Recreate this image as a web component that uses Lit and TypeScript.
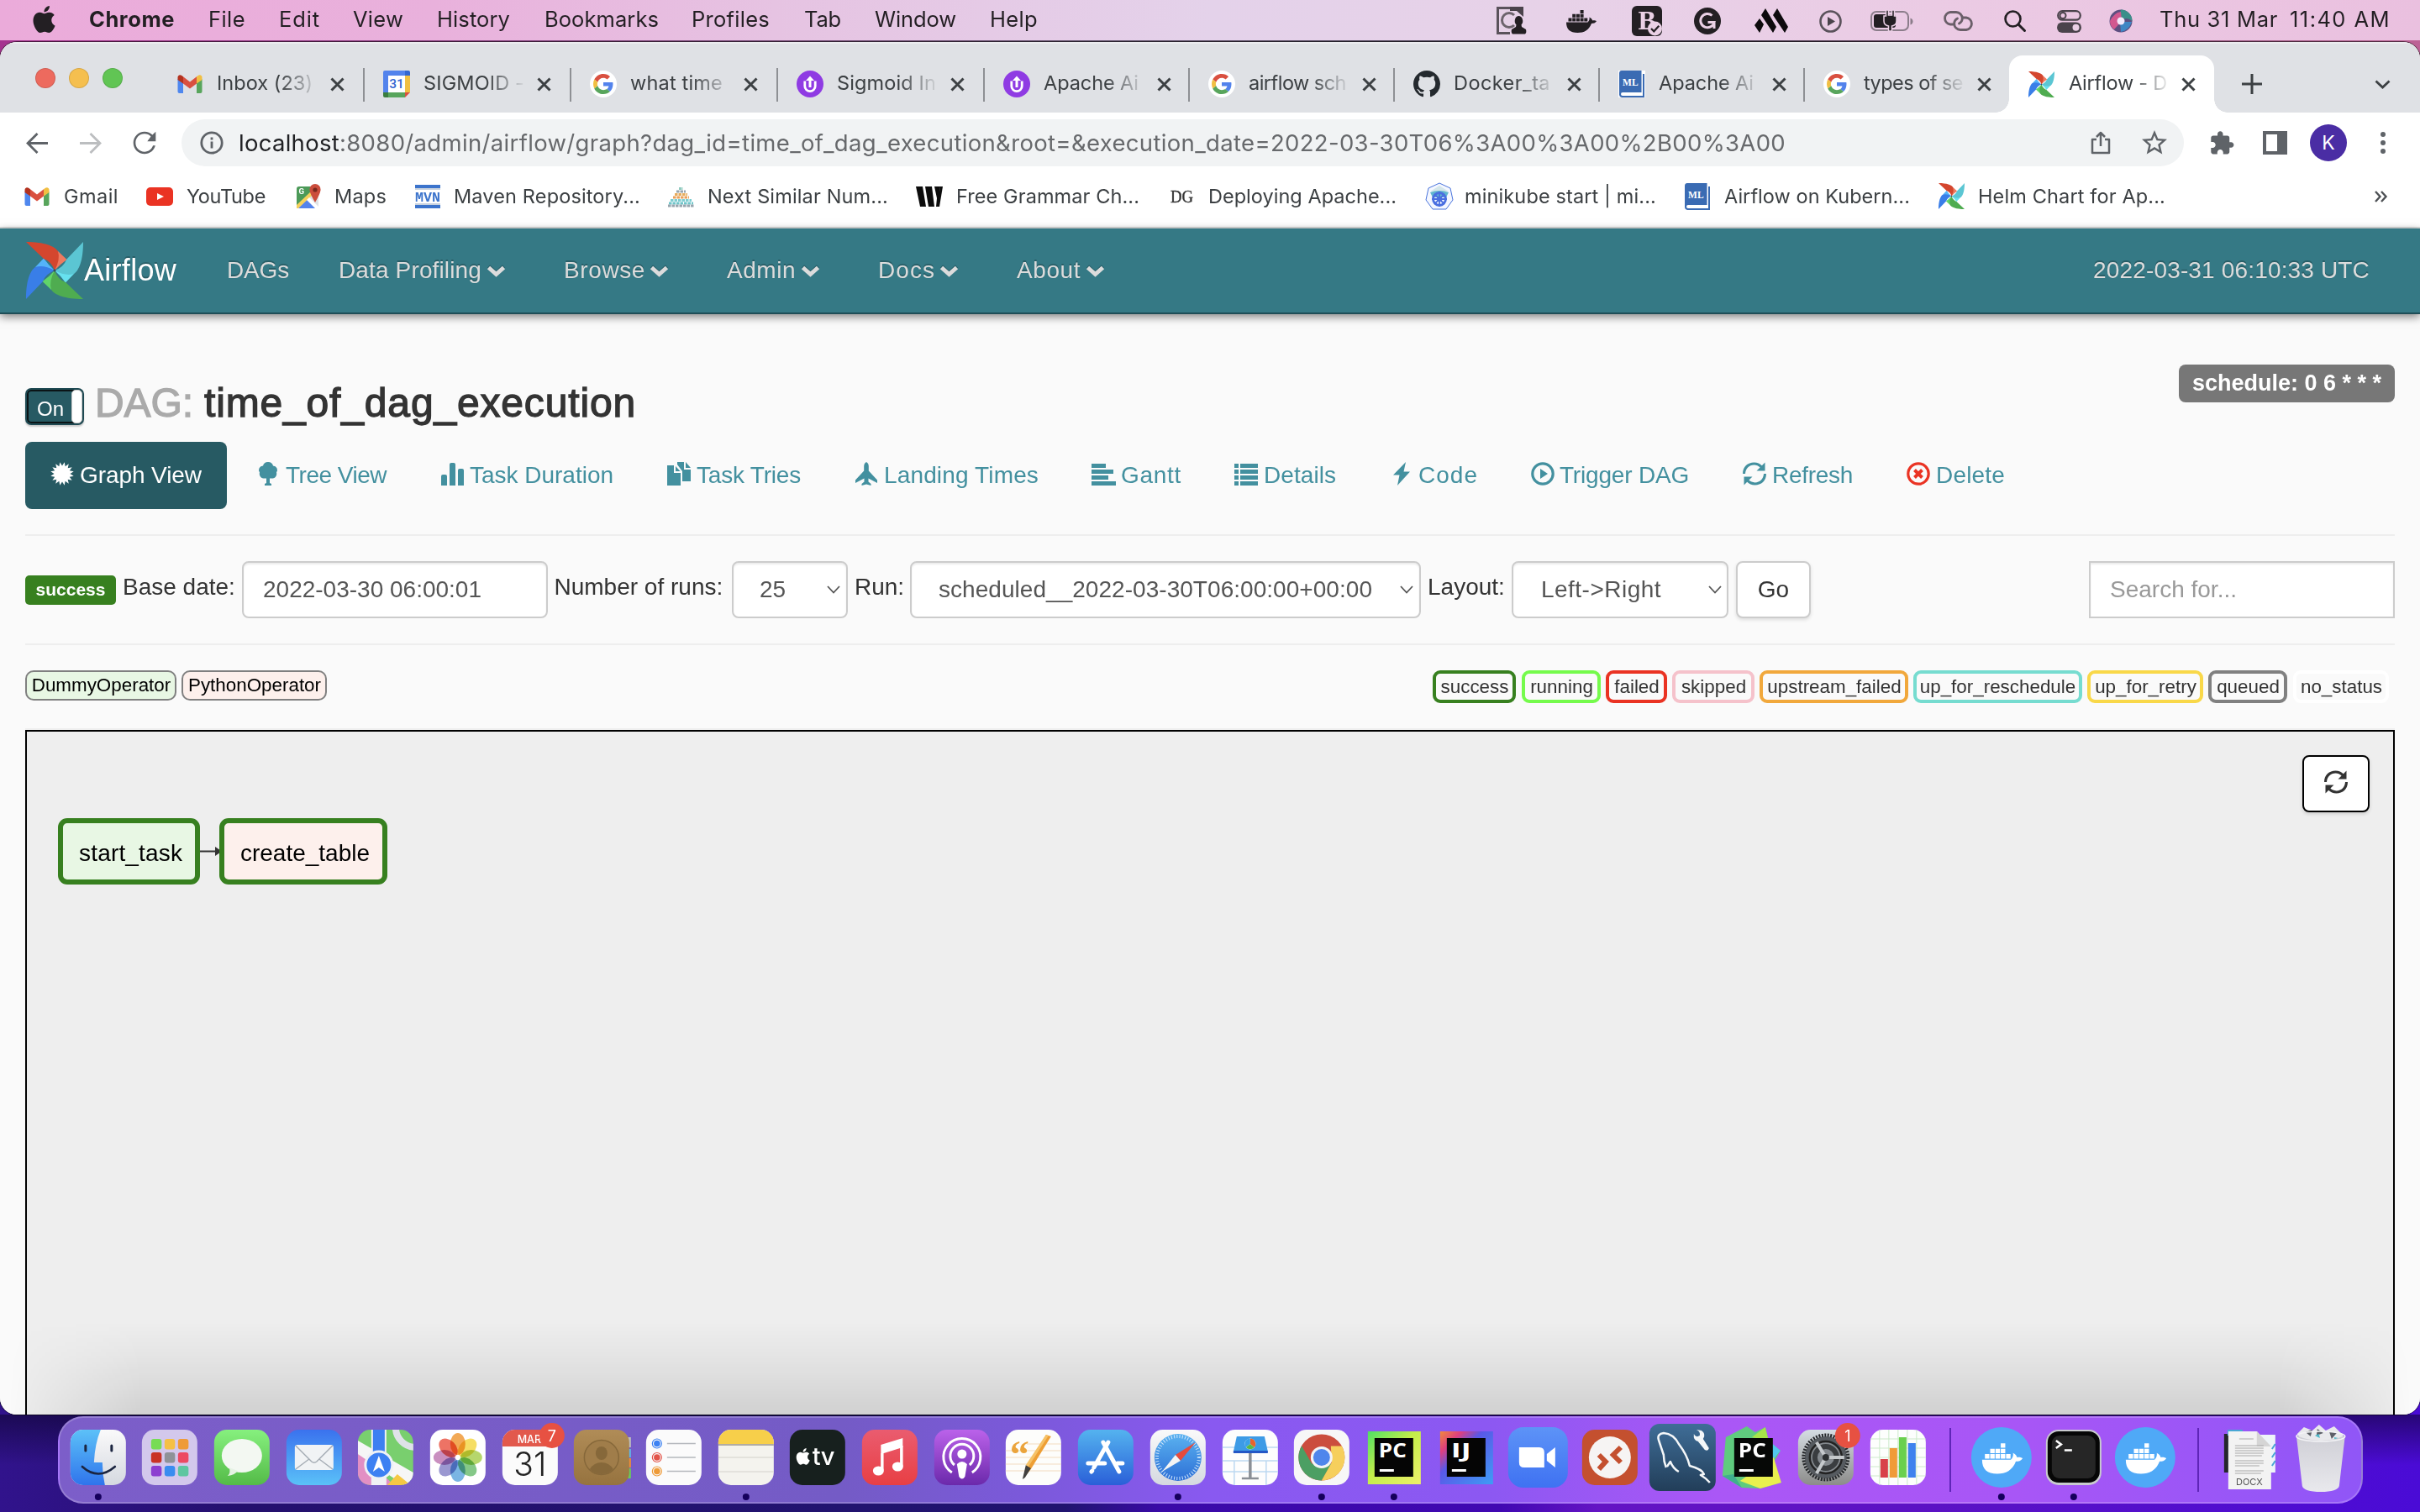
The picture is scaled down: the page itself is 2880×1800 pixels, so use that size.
import { LitElement, html, svg, css } from "lit";
import type { SVGTemplateResult, TemplateResult } from "lit";
import { styleMap } from "lit/directives/style-map.js";
import { classMap } from "lit/directives/class-map.js";

const INSET = 1;

/** A run of text tracked so that it fills a box `w` pixels wide, after a small left inset. */
class FitLabel extends LitElement {
  static properties = { text: {}, w: { type: Number } };
  declare text: string;
  declare w: number;
  static styles = css`
    :host { display: inline-block; white-space: pre; flex: none; padding-left: 1px; }
  `;
  render() {
    return html`<span>${this.text}</span>`;
  }
  updated() {
    const span = this.renderRoot.querySelector("span") as HTMLElement;
    span.style.letterSpacing = "0px";
    const natural = span.getBoundingClientRect().width;
    if (this.w) span.style.letterSpacing = `${(this.w - INSET - natural) / this.text.length}px`;
  }
}
customElements.define("fit-label", FitLabel);

const fit = (text: string, w: number) => html`<fit-label .text=${text} .w=${w}></fit-label>`;

interface Cell { x: number; body: TemplateResult }

/** Lays cells out in a row; each is as wide as the distance to the next one. */
const row = (cells: Cell[], end: number) =>
  cells.map((c, i) => {
    const next = i + 1 < cells.length ? cells[i + 1].x : end;
    return html`<div class="cell" style=${styleMap({ width: `${next - c.x}px` })}>${c.body}</div>`;
  });

const icon = (w: number, h: number, box: string, body: SVGTemplateResult) =>
  html`<svg width=${w} height=${h} viewBox=${box}>${body}</svg>`;

/* ---------- brand marks ---------- */

const blade = (deg: number, dark: string, light: string) => svg`
  <g transform="rotate(${deg} 34 34)">
    <path fill=${light} d="M38 11L48.5 21Q40 27 34 34Q38 22 38 11Z"/>
    <path fill=${dark} d="M0 0C22 0 34 5 38 11Q41 21 34 34Q30 23 21 20Z"/>
  </g>`;
const pinwheel = (s: number) => icon(s, s, "0 0 68 68", svg`
  ${blade(90, "#5bc6d3", "#67e1ef")}${blade(180, "#4fac50", "#61d469")}
  ${blade(270, "#397ee8", "#54b3fa")}${blade(0, "#d4462e", "#ee7a5f")}
  <circle cx="34" cy="34" r="1.6" fill="#35505a"/>`);

const gmail = icon(32, 32, "-1.5 -5 32 32", svg`
  <path fill="#4f87ee" d="M0 5V20Q0 22 2 22H6.5V10Z"/>
  <path fill="#58a55c" d="M29 5V20Q29 22 27 22H22.5V10Z"/>
  <path fill="#d95040" d="M6.5 2.2L14.5 8.6L22.5 2.2V10.5L14.5 16.6L6.5 10.5Z"/>
  <path fill="#b3321f" d="M0 6V3.4Q0 .4 2.8 .2Q4.4 .3 6.5 2.2V10.5Z"/>
  <path fill="#f1bf42" d="M29 6V3.4Q29 .4 26.2 .2Q24.6 .3 22.5 2.2V10.5Z"/>`);

const calendarMark = icon(32, 32, "0 0 32 32", svg`
  <path fill="#5383ec" d="M2 0H26V6H6V26H0V2Q0 0 2 0Z"/>
  <path fill="#3367d1" d="M26 0H30Q32 0 32 2V6H26Z"/>
  <path fill="#f1bf42" d="M26 6H32V26H26Z"/>
  <path fill="#58a55c" d="M6 26H26V32H6Z"/>
  <path fill="#3a7d3f" d="M0 26H6V32H2Q0 32 0 30Z"/>
  <path fill="#d95040" d="M26 26H32L26 32Z"/>
  <rect x="6" y="6" width="20" height="20" fill="#fff"/>
  <text x="16" y="21.4" text-anchor="middle" font-family="Roboto" font-size="15.5" font-weight="500" fill="#3367d1">31</text>`);

const googleMark = icon(32, 32, "0 0 32 32", svg`
  <circle cx="16" cy="16" r="16" fill="#fff"/>
  <g transform="translate(4 4) scale(.5)">
    <path fill="#d95040" d="M24 9.5c3.54 0 6.71 1.22 9.21 3.6l6.85-6.85C35.9 2.38 30.47 0 24 0 14.62 0 6.51 5.38 2.56 13.22l7.98 6.19C12.43 13.72 17.74 9.5 24 9.5z"/>
    <path fill="#5383ec" d="M46.98 24.55c0-1.57-.15-3.09-.38-4.55H24v9.02h12.94c-.58 2.96-2.26 5.48-4.78 7.18l7.73 6c4.51-4.18 7.09-10.36 7.09-17.65z"/>
    <path fill="#f1bf42" d="M10.53 28.59c-.48-1.45-.76-2.99-.76-4.59s.27-3.14.76-4.59l-7.98-6.19C.92 16.46 0 20.12 0 24c0 3.88.92 7.54 2.56 10.78l7.97-6.19z"/>
    <path fill="#58a55c" d="M24 48c6.48 0 11.93-2.13 15.89-5.81l-7.73-6c-2.15 1.45-4.92 2.3-8.16 2.3-6.26 0-11.57-4.22-13.47-9.91l-7.98 6.19C6.51 42.62 14.62 48 24 48z"/>
  </g>`);

const upMark = icon(32, 32, "0 0 32 32", svg`
  <circle cx="16" cy="16" r="16" fill="#8f3be3"/>
  <path d="M9.800 12.500V18.500a6.200 6.200 0 0 0 12.400 0V12.500" fill="none" stroke="#fff" stroke-width="2.800"/>
  <path d="M16 6.500L21 12H17.500V20H14.500V12H11Z" fill="#fff"/>`);

const githubMark = icon(32, 32, "0 0 16 16", svg`
  <path fill="#24292e" d="M8 0C3.58 0 0 3.58 0 8c0 3.54 2.29 6.53 5.47 7.59.4.07.55-.17.55-.38 0-.19-.01-.82-.01-1.49-2.01.37-2.53-.49-2.69-.94-.09-.23-.48-.94-.82-1.13-.28-.15-.68-.52-.01-.53.63-.01 1.08.58 1.23.82.72 1.21 1.87.87 2.33.66.07-.52.28-.87.51-1.07-1.78-.2-3.64-.89-3.64-3.95 0-.87.31-1.59.82-2.15-.08-.2-.36-1.02.08-2.12 0 0 .67-.21 2.2.82.64-.18 1.32-.27 2-.27.68 0 1.36.09 2 .27 1.53-1.04 2.2-.82 2.2-.82.44 1.1.16 1.92.08 2.12.51.56.82 1.27.82 2.15 0 3.07-1.87 3.75-3.65 3.95.29.25.54.73.54 1.48 0 1.07-.01 1.93-.01 2.2 0 .21.15.46.55.38A8.013 8.013 0 0016 8c0-4.42-3.58-8-8-8z"/>`);

const bookMark = icon(32, 32, "0 0 32 32", svg`
  <rect x="0" y="0" width="32" height="32" fill="#fff"/>
  <path fill="#3a6bb3" d="M4 0H27.5V26H5a2 2 0 0 0 0 4H29V4H31V32H4a3.4 3.4 0 0 1-3-3V3.500A3.400 3.400 0 0 1 4 0Z"/>
  <text x="14.300" y="17.600" text-anchor="middle" font-family="Liberation Serif" font-weight="700" font-size="11.500" fill="#fff">ML</text>`);

/* ---------- menu bar ---------- */

const applePath = "M12.152 6.896c-.948 0-2.415-1.078-3.96-1.04-2.04.027-3.91 1.183-4.961 3.014-2.117 3.675-.546 9.103 1.519 12.09 1.013 1.454 2.208 3.09 3.792 3.039 1.52-.065 2.09-.987 3.935-.987 1.831 0 2.35.987 3.96.948 1.637-.026 2.676-1.48 3.676-2.948 1.156-1.688 1.636-3.325 1.662-3.415-.039-.013-3.182-1.221-3.22-4.857-.026-3.04 2.48-4.494 2.597-4.559-1.429-2.09-3.623-2.324-4.39-2.376-2-.156-3.675 1.09-4.61 1.09zM15.53 3.83c.843-1.012 1.4-2.427 1.245-3.83-1.207.052-2.662.805-3.532 1.818-.78.896-1.454 2.338-1.273 3.714 1.338.104 2.715-.688 3.559-1.701";

const MENU: [string, number, number][] = [
  ["Chrome", 105, 103], ["File", 247, 45], ["Edit", 331, 50], ["View", 419, 61], ["History", 519, 88],
  ["Bookmarks", 647, 137], ["Profiles", 822, 94], ["Tab", 956, 45], ["Window", 1040, 98], ["Help", 1177, 58],
];

const whale = (fill: string) => svg`
  <g fill=${fill}>
    <path d="M0 15.500H25.500C27 14 28 12 27.500 9.500C30 10.500 31 12.500 31 13.500C33 13 35 13.500 36 14.300C34.500 16.500 32.500 17 30 17C27 25 21 28 13.500 28C4.500 28 0 24 0 15.500Z"/>
    <path d="M2.500 10.500h4v4h-4zM7.200 10.500h4v4h-4zM11.900 10.500h4v4h-4zM16.600 10.500h4v4h-4zM21.300 10.500h4v4h-4zM7.200 5.700h4v4h-4zM11.900 5.700h4v4h-4zM16.600 5.700h4v4h-4zM16.600 .9h4v4h-4z"/>
  </g>`;

const STATUS: Cell[] = [
  { x: 1780, body: icon(38, 34, "0 0 38 34", svg`
    <path d="M1 0H17V3H4V30H17V33H1Z" fill="#5a525b"/><path d="M17 0H33V12L25 5H17Z" fill="#4a434b"/>
    <path d="M22 10A8.500 8.500 0 1 0 22 22" fill="none" stroke="#6d646d" stroke-width="3"/>
    <path d="M27 11a5 6 0 0 1 3.500 10.500l.5 2.500 5 3q1 4-1 5.500H20q-2-2-1-5.500l5-3 .5-2.500A5 6 0 0 1 27 11Z" fill="#231f23"/>`) },
  { x: 1864, body: icon(36, 28, "0 0 36 28", whale("#231f23")) },
  { x: 1942, body: icon(36, 36, "0 0 36 36", svg`
    <rect width="36" height="36" rx="6" fill="#231f23"/>
    <text x="7.500" y="28" font-family="Liberation Serif" font-weight="700" font-size="32" fill="#ead0e5">B</text>
    <circle cx="27.500" cy="27" r="8.500" fill="#ead0e5"/><path d="M23 27l3.300 3.300 6-6.500" fill="none" stroke="#231f23" stroke-width="2.200"/>`) },
  { x: 2016, body: icon(32, 32, "0 0 32 32", svg`
    <circle cx="16" cy="16" r="16" fill="#231f23"/>
    <path d="M21.500 9.500A8.200 8.200 0 1 0 24 17.500H16.500M24 17V25" fill="none" stroke="#ead0e5" stroke-width="3"/>`) },
  { x: 2088, body: icon(40, 30, "0 0 40 30", svg`
    <path d="M6 12L11 19 6 29 0 20ZM13 0L26 22 22 29 8 8ZM27 0L40 22 36 29 22 8Z" fill="#0d0b0d"/>`) },
  { x: 2165, body: icon(27, 27, "0 0 27 27", svg`
    <circle cx="13.500" cy="13.500" r="12" fill="none" stroke="#5a525b" stroke-width="2.600"/><path d="M10 8L19 13.500 10 19Z" fill="#4a434b"/>`) },
  { x: 2226, body: icon(51, 26, "0 0 51 26", svg`
    <rect x="1" y="2" width="44" height="22" rx="6" fill="none" stroke="#8b7d8a" stroke-width="2"/>
    <path d="M47.500 9.500q3 1 3 4t-3 4Z" fill="#8b7d8a"/><rect x="4" y="5" width="26" height="16" rx="3" fill="#231f23"/>
    <path d="M16 7h2.500V0h3v6h4V0h3v7H31v6q0 5-5.500 6V25h-4v-6Q16 18 16 13Z" fill="#231f23" stroke="#ead0e5" stroke-width="1.500"/>`) },
  { x: 2312, body: icon(37, 24, "0 0 37 24", svg`
    <g fill="none" stroke="#6a5f69" stroke-width="2.800" stroke-linecap="round">
      <path d="M13 16H9A7.300 7.300 0 0 1 9 1.500H16a7.300 7.300 0 0 1 7.300 7.300Q23.300 13 19.500 15"/><path d="M24 8H28a7.300 7.300 0 0 1 0 14.500H21a7.300 7.300 0 0 1-7.300-7.300Q13.700 11 17.500 9"/></g>`) },
  { x: 2385, body: icon(26, 26, "0 0 26 26", svg`
    <circle cx="10.500" cy="10.500" r="9" fill="none" stroke="#231f23" stroke-width="2.600"/><path d="M17 17L24.500 24.500" stroke="#231f23" stroke-width="3" stroke-linecap="round"/>`) },
  { x: 2448, body: icon(29, 27, "0 0 29 27", svg`
    <rect x="1.200" y="1.200" width="26.600" height="10.500" rx="5.200" fill="none" stroke="#4a434b" stroke-width="2.200"/><circle cx="7" cy="6.500" r="3.500" fill="none" stroke="#4a434b" stroke-width="2"/>
    <rect y="14.500" width="29" height="12.500" rx="6.200" fill="#4a434b"/><circle cx="22.500" cy="20.700" r="4" fill="#ead0e5"/>`) },
  { x: 2510, body: icon(28, 28, "0 0 28 28", svg`
    <circle cx="14" cy="14" r="13.500" fill="#5d4f80"/><path d="M14 .5A13.500 13.500 0 0 1 27.500 14Q20 8 14 14Q12 6 14 .5Z" fill="#3b8f8a"/>
    <path d="M1 14Q6 4 14 3L15 14 6 24Q1 20 1 14Z" fill="#d2588f"/><path d="M27 15Q24 25 14 27L13 15Z" fill="#3f86c4"/><circle cx="14" cy="14" r="4.500" fill="#f3e9fb"/>`) },
  { x: 2569, body: fit("Thu 31 Mar", 142) },
  { x: 2724, body: fit("11:40 AM", 121) },
];

/* ---------- browser chrome ---------- */

interface Tab { label: string; w: number; width: number; mark: TemplateResult; active?: boolean; noSep?: boolean }
const TABS: Tab[] = [
  { label: "Inbox (23)", w: 115, width: 246, mark: gmail },
  { label: "SIGMOID -", w: 121, width: 246, mark: calendarMark },
  { label: "what time", w: 111, width: 246, mark: googleMark },
  { label: "Sigmoid In", w: 119, width: 246, mark: upMark },
  { label: "Apache Ai", w: 114, width: 244, mark: upMark },
  { label: "airflow sch", w: 117, width: 244, mark: googleMark },
  { label: "Docker_ta", w: 116, width: 244, mark: githubMark },
  { label: "Apache Ai", w: 114, width: 244, mark: bookMark },
  { label: "types of se", w: 119, width: 244, mark: googleMark, noSep: true },
  { label: "Airflow - D", w: 118, width: 244, mark: pinwheel(31), active: true, noSep: true },
];

const BOOKMARKS: { x: number; mark: TemplateResult; tx: number; w: number; label: string }[] = [
  { x: 28, mark: gmail, tx: 75, w: 66, label: "Gmail" },
  { x: 174, mark: icon(32, 32, "0 0 32 32", svg`<rect y="5" width="32" height="22" rx="5" fill="#ea3323"/><path d="M13 12L21 16 13 20Z" fill="#fff"/>`), tx: 221, w: 95, label: "YouTube" },
  { x: 353, mark: icon(29, 30, "0 0 29 30", svg`
    <rect y="3" width="26" height="26" rx="3" fill="#dfe3e6"/><path d="M3 3H18L22 10 0 29V6Q0 3 3 3Z" fill="#4c9a58"/>
    <path d="M13 16L25 29H2Z" fill="#5383ec"/><path d="M0 25L17 9 19 13 2 29H0Z" fill="#f5d15c"/><path d="M15 16L28 29H22L12 19Z" fill="#fff"/>
    <path d="M22 0a6.600 6.600 0 0 1 6.600 7Q28 12 22 22Q16 12 15.400 7A6.600 6.600 0 0 1 22 0Z" fill="#cb4d3c"/><circle cx="22" cy="7" r="2.600" fill="#77291e"/>
    <text x="2.500" y="12" font-family="Roboto" font-weight="700" font-size="9.500" fill="#fff">G</text>`), tx: 397, w: 63, label: "Maps" },
  { x: 494, mark: icon(30, 28, "0 0 30 28", svg`<path d="M0 0H30V4H0ZM0 24H30V28H0Z" fill="#3c74cc"/><path d="M0 4H30V6H0ZM0 22H30V24H0Z" fill="#c9d3df"/>
    <text x="0" y="19.500" font-family="Liberation Mono" font-weight="700" font-size="16" fill="#3c74cc" textLength="30" lengthAdjust="spacingAndGlyphs">MVN</text>`), tx: 539, w: 223, label: "Maven Repository..." },
  { x: 794, mark: icon(32, 24, "0 0 32 24", svg`<g fill="none" stroke-width="3" stroke-dasharray="3.500 1">
    <path d="M14 2.500H19" stroke="#8fcabf"/><path d="M11 6H22" stroke="#98a5ae"/><path d="M9 9.500H24" stroke="#e6ab5c"/><path d="M7 13H26" stroke="#e9a15a"/><path d="M4 16.500H29" stroke="#7dccd0"/><path d="M2 20H31" stroke="#6fc5c9"/><path d="M1 23H32" stroke="#98a5ae"/></g>`), tx: 841, w: 216, label: "Next Similar Num..." },
  { x: 1090, mark: icon(32, 24, "0 0 32 24", svg`<path d="M0 0H8L12 24H5ZM11 0H19L22 24H15ZM22 0H29L27 24H24L25 14Z" fill="#0c0c0c"/><path d="M29 0H32L28 24H25Z" fill="#0c0c0c"/>`), tx: 1137, w: 219, label: "Free Grammar Ch..." },
  { x: 1393, mark: icon(30, 24, "0 0 30 24", svg`<text x="0" y="19" font-family="Liberation Serif" font-size="20" fill="#333" stroke="#333" stroke-width=".4" textLength="27" lengthAdjust="spacingAndGlyphs">DG</text>`), tx: 1437, w: 225, label: "Deploying Apache..." },
  { x: 1697, mark: icon(32, 32, "0 0 32 32", svg`<path d="M16 0L29 6 32 20 24 31H8L0 20 3 6Z" fill="#f4f7ff" stroke="#4a74dc" stroke-width="1"/><path d="M16 3L27 10H5Z" fill="#d4e6ea"/><path d="M5 11Q16 7 27 11L24 17H8Z" fill="#5fb6cf"/>
    <circle cx="16" cy="19" r="7.500" fill="none" stroke="#4a6fe0" stroke-width="2.800"/><path d="M16 10V28M7 19H25M10 13L22 25M22 13L10 25" stroke="#4a6fe0" stroke-width="1.800"/><circle cx="16" cy="19" r="3" fill="#4a6fe0"/>`), tx: 1742, w: 229, label: "minikube start | mi..." },
  { x: 2004, mark: bookMark, tx: 2051, w: 222, label: "Airflow on Kubern..." },
  { x: 2307, mark: pinwheel(31), tx: 2353, w: 224, label: "Helm Chart for Ap..." },
];

const chevron = icon(23, 14, "0 0 23 14", svg`<path d="M2.500 2.500L11.500 11L20.500 2.500" fill="none" stroke="#275f69" stroke-width="4.800" transform="translate(0 -1.500)"/><path d="M2.500 2.500L11.500 10.500L20.500 2.500" fill="none" stroke="#dcdcdc" stroke-width="5"/>`);
const NAV: { x: number; w: number; label: string; cx?: number }[] = [
  { x: 269, w: 75, label: "DAGs" }, { x: 402, w: 171, label: "Data Profiling", cx: 579 }, { x: 670, w: 98, label: "Browse", cx: 773 },
  { x: 864, w: 83, label: "Admin", cx: 953 }, { x: 1044, w: 69, label: "Docs", cx: 1118 }, { x: 1209, w: 77, label: "About", cx: 1292 },
];

/* ---------- view tabs ---------- */

const burst = Array.from({ length: 32 }, (_, i) => {
  const a = (i * Math.PI) / 16 - Math.PI / 2 + Math.PI / 16;
  const r = i % 2 ? 9.5 : 14;
  return `${(14 + r * Math.cos(a)).toFixed(2)},${(14 + r * Math.sin(a)).toFixed(2)}`;
}).join(" ");

const syncGlyph = (s: number) => icon(s, s, "0 0 28 28", svg`
  <g fill="currentColor"><path d="M0 14C0 5.500 6 .5 13.500 .5C17.500 .5 20.500 2 22.800 4.200L26.500 .5V10.500H16.500L20.600 6.400C18.600 4.700 16.500 3.600 13.500 3.600C7.500 3.600 3.400 8 3 14Z"/>
  <path d="M28 14C28 22.500 22 27.500 14.500 27.500C10.500 27.500 7.500 26 5.200 23.800L1.500 27.500V17.500H11.500L7.400 21.600C9.400 23.300 11.500 24.400 14.500 24.400C20.500 24.400 24.600 20 25 14Z"/></g>`);

const VIEWS: { x: number; tx: number; w: number; label: string; glyph: TemplateResult; cls?: string }[] = [
  { x: 307, tx: 339, w: 121, label: "Tree View", glyph: icon(24, 28, "0 0 24 28", svg`<path fill="currentColor" d="M12 0a6 6 0 0 1 6 4.500a5 5 0 0 1 4 8a5.500 5.500 0 0 1-6 7H14V25l2 1v2H8V26l2-1V19.500H8a5.500 5.500 0 0 1-6-7a5 5 0 0 1 4-8A6 6 0 0 1 12 0Z"/>`) },
  { x: 525, tx: 558, w: 172, label: "Task Duration", glyph: icon(27, 28, "0 0 27 28", svg`<path fill="currentColor" d="M0 28V17q0-2 2-2h3q2 0 2 2V28ZM10 28V3q0-2 2-2h3q2 0 2 2V28ZM20 28V10q0-2 2-2h3q2 0 2 2V28Z"/>`) },
  { x: 794, tx: 828, w: 125, label: "Task Tries", glyph: icon(29, 28, "0 0 29 28", svg`<g fill="currentColor"><path d="M0 4H8V13H16V28H0Z"/><path d="M10 5L15.500 11H10Z"/><path d="M12 0H20V9H28V23H18V11L12 3Z"/><path d="M22 0L28 7H22Z"/></g>`) },
  { x: 1017, tx: 1051, w: 185, label: "Landing Times", glyph: icon(28, 28, "0 0 28 28", svg`<path fill="currentColor" d="M14 0q2.800 1.500 2.800 5V10.500L27 21.500V25L16.500 19.500V23.500L19.500 26V28L14 26.500 8.500 28V26L11.500 23.500V19.500L1 25V21.500L11.200 10.500V5Q11.200 1.500 14 0Z"/>`) },
  { x: 1299, tx: 1333, w: 73, label: "Gantt", glyph: icon(29, 28, "0 0 29 28", svg`<path fill="currentColor" d="M0 2H17V7H0ZM0 9H26V14H0ZM0 16H20V21H0ZM0 23H29V28H0Z"/>`) },
  { x: 1469, tx: 1503, w: 87, label: "Details", glyph: icon(28, 28, "0 0 28 28", svg`<path fill="currentColor" d="M0 2H5V7H0ZM7 2H28V7H7ZM0 9H5V14H0ZM7 9H28V14H7ZM0 16H5V21H0ZM7 16H28V21H7ZM0 23H5V28H0ZM7 23H28V28H7Z"/>`) },
  { x: 1658, tx: 1687, w: 72, label: "Code", glyph: icon(20, 28, "0 0 20 28", svg`<path fill="currentColor" d="M15 0L0 15.500H7.500L5 28L20 11.500H12.500Z"/>`) },
  { x: 1822, tx: 1855, w: 155, label: "Trigger DAG", glyph: icon(28, 28, "0 0 28 28", svg`<circle cx="14" cy="14" r="12.200" fill="none" stroke="currentColor" stroke-width="3.200"/><path fill="currentColor" d="M11 8L20 14 11 20Z"/>`) },
  { x: 2074, tx: 2108, w: 97, label: "Refresh", glyph: syncGlyph(28) },
  { x: 2269, tx: 2303, w: 83, label: "Delete", cls: "danger", glyph: icon(28, 28, "0 0 28 28", svg`<circle cx="14" cy="14" r="12.200" fill="none" stroke="currentColor" stroke-width="3.200"/><path d="M9.500 9.500L18.500 18.500M18.500 9.500L9.500 18.500" stroke="currentColor" stroke-width="4"/>`) },
];

const STATES: [string, number, number, string][] = [
  ["success", 1705, 99, "#37801f"], ["running", 1811, 94, "#75fb4c"], ["failed", 1911, 73, "#ea3323"],
  ["skipped", 1990, 98, "#f5c2cb"], ["upstream_failed", 2094, 177, "#f1a83c"], ["up_for_reschedule", 2276.5, 201, "#76dcd0"],
  ["up_for_retry", 2484, 138, "#f9d849"], ["queued", 2628, 94, "#808080"], ["no_status", 2729, 114, "#ffffff"],
];

const downV = icon(16, 10, "0 0 16 10", svg`<path d="M1 1L8 8.500L15 1" fill="none" stroke="#555" stroke-width="1.800"/>`);

/* ---------- dock ---------- */

const tile = (fill: string) => svg`<rect x="-33" y="-33" width="66" height="66" rx="15" fill=${fill}/>`;
const badge = (n: string) => svg`<circle cx="26" cy="-26" r="15" fill="#e75142"/><text x="26" y="-19.500" text-anchor="middle" font-family="Inter" font-size="18" fill="#fff">${n}</text>`;
const petals = ["#f09a38", "#f5d94a", "#a9cf52", "#6fbf73", "#62a8de", "#8a86c9", "#c07bb5", "#ea5a4a"];
const jet = (a: string) => svg`<rect x="-31" y="-31" width="63" height="63" fill="url(#${a})"/><rect x="-23" y="-23" width="46" height="46" fill="#050505"/><path d="M-17 15.500H0" stroke="#fff" stroke-width="3"/>`;
const dockerCircle = svg`<circle r="36" fill="#4fa9f7"/><g transform="translate(-23 -18) scale(1.34)">${whale("#fff")}</g>`;
const jetText = (t: string) => svg`<text x="-18" y="0" font-family="Open Sans" font-weight="700" font-size="23" fill="#fff" textLength=${t === "PC" ? 33 : 24} lengthAdjust="spacingAndGlyphs">${t}</text>`;

const APPS: { g: SVGTemplateResult; dot?: boolean }[] = [
  { dot: true, g: svg`${tile("url(#silver)")}<path d="M3 -33H-18A15 15 0 0 0 -33 -18V18A15 15 0 0 0 -18 33H8Q5 20 5 6H-5Q-4 -16 3 -33Z" fill="url(#finder)"/>
    <path d="M-15 -14V-8M16 -14V-8" stroke="#1b2540" stroke-width="3" stroke-linecap="round"/><path d="M-19 11Q0 28 20 11" fill="none" stroke="#1b2540" stroke-width="2.600" stroke-linecap="round"/>` },
  { g: svg`${tile("#d3c8ec")}${["#77dc55", "#f5c044", "#ee9b38", "#c93325", "#8f9298", "#ec4a62", "#8c3fd0", "#3a8cf0", "#5ec6a0"].map((c, i) => svg`<rect x=${-22 + (i % 3) * 16} y=${-22 + Math.floor(i / 3) * 16} width="12.500" height="12.500" rx="3" fill=${c}/>`)}` },
  { g: svg`${tile("url(#msg)")}<ellipse cx="0" cy="-2" rx="24" ry="20" fill="#f3f8f2"/><path d="M-15 12Q-13 19 -17 22Q-8 21 -5 16Z" fill="#e6f3e4"/>` },
  { g: svg`${tile("url(#mail)")}<rect x="-23" y="-15" width="46" height="30" rx="3" fill="#f1f3f5"/><path d="M-22 -14L-3 5Q0 7.500 3 5L22 -14M-22 14L-6 2M22 14L6 2" fill="none" stroke="#a6adb5" stroke-width="1.500"/>` },
  { g: svg`<clipPath id="mapclip"><rect x="-33" y="-33" width="66" height="66" rx="15"/></clipPath><g clip-path="url(#mapclip)"><rect x="-33" y="-33" width="66" height="66" fill="#79cf6e"/>
    <path d="M-33 -8L10 33H-33Z" fill="#e28fc4"/><path d="M-33 -20L33 18V33H22L-33 -4Z" fill="#f6f6f6"/><path d="M2 33L14 20 30 33Z" fill="#f5c843"/><path d="M-17 -33H1V33H-17Z" fill="#f1f1f4"/><path d="M-15 -33H-1V0H-15Z" fill="#3d80f2"/>
    <circle cx="36" cy="-36" r="24" fill="none" stroke="#dfe2e8" stroke-width="8"/></g>
    <circle cx="-8" cy="9" r="16" fill="#3d80f2" stroke="#eef1f6" stroke-width="3"/><path d="M-8 -2L-1 17 -8 12 -15 17Z" fill="#fff"/>` },
  { g: svg`${tile("#fff")}${petals.map((c, i) => svg`<ellipse class="petal" cx="0" cy="-16" rx="9" ry="13" fill=${c} transform="rotate(${i * 45})"/>`)}` },
  { g: svg`${tile("#fbfbfb")}<path d="M-33 -13V-18A15 15 0 0 1 -18 -33H18A15 15 0 0 1 33 -18V-13Z" fill="#e2594c"/>
    <text x="-1" y="-17.500" text-anchor="middle" font-family="Inter" font-size="12.500" font-weight="500" fill="#fff">MAR</text>
    <text x="0" y="22" text-anchor="middle" font-family="Inter" font-size="39" font-weight="300" fill="#222">31</text>${badge("7")}` },
  { g: svg`<path d="M30 -24h5v12h-5z" fill="#bdbdbd"/><path d="M30 -10h5v10h-5z" fill="#5fb6e8"/><path d="M30 1h5v11h-5z" fill="#ee8c38"/><path d="M30 13h5v12h-5z" fill="#6acb5c"/>${tile("url(#brown)")}
    <circle r="20.500" fill="#a07d4a" stroke="#86683a" stroke-width="1.500"/><ellipse cy="-5" rx="7" ry="8" fill="#86683a"/><path d="M-14 14Q-9 6 0 6T14 14Q8 20 0 20T-14 14Z" fill="#86683a"/>` },
  { g: svg`${tile("#fbfbfb")}${["#3d82f2", "#e2554a", "#ee9b38"].map((c, i) => svg`<circle cx="-20" cy=${-16.5 + i * 16.5} r="5.500" fill="none" stroke=${c} stroke-width="1.200"/><circle cx="-20" cy=${-16.5 + i * 16.5} r="3.800" fill=${c}/><path d="M-8 ${-16.5 + i * 16.5}H26" stroke="#b5b8bd" stroke-width="1.500"/>`)}` },
  { dot: true, g: svg`${tile("#f4f3ee")}<path d="M-33 -16V-18A15 15 0 0 1 -18 -33H18A15 15 0 0 1 33 -18V-16Z" fill="#f7cf4a"/><path d="M-33 -15H33" stroke="#9b948a" stroke-width="1.500"/><path d="M-33 0H33M-33 17H33" stroke="#d3d1cb" stroke-width="1"/>` },
  { g: svg`${tile("#17201e")}<g transform="translate(-27 -11) scale(.82)" fill="#fff"><path d=${applePath}/></g><text x="-6" y="9" font-family="Inter" font-weight="500" font-size="29" letter-spacing="-.5" fill="#fff">tv</text>` },
  { g: svg`${tile("url(#music)")}<path d="M-9 15V-14L14 -21V-13L-9 -6" fill="#fff" stroke="#fff" stroke-width="3"/><path d="M-9 -5V16" stroke="#fff" stroke-width="3"/><path d="M14 -14V11" stroke="#fff" stroke-width="3.500"/><ellipse cx="-13.500" cy="16" rx="6.500" ry="5.500" fill="#fff"/><ellipse cx="9.500" cy="11" rx="6.500" ry="5.500" fill="#fff"/>` },
  { g: svg`${tile("url(#pod)")}<g fill="none" stroke="#fff" stroke-width="3"><path d="M-12 18A22 22 0 1 1 12 18"/><path d="M-9 9A14 14 0 1 1 9 9"/></g><circle cy="-4" r="5.500" fill="#fff"/><path d="M-6 8Q0 2 6 8L3.500 23Q0 28 -3.500 23Z" fill="#fff"/>` },
  { g: svg`${tile("#fdfdfb")}<path d="M-33 -8H33M-33 0H33M-33 8H33M-33 16H33M-8 -16H33" stroke="#f3dcc0" stroke-width="1"/><text x="-28" y="12" font-family="Liberation Serif" font-weight="700" font-size="46" fill="#eba43c">“</text>
    <path d="M15 -27L21 -25 -3 14 -11 24 -9 12Z" fill="#ee9f35"/><path d="M-9 9L-3 13 -10 24 -13 26Z" fill="#42403e"/><path d="M15 -27L18 -26 -6 11 -9 9Z" fill="#f6c267"/>` },
  { g: svg`${tile("url(#store)")}<g stroke="#fff" stroke-width="5" stroke-linecap="round" fill="none"><path d="M3 -18L-14 12M-3 -18L16 17M-21 7H-1M14 7H20M-17 17L-16 16"/></g>` },
  { dot: true, g: svg`${tile("url(#silver)")}<circle r="28" fill="url(#safari)"/><circle r="25" fill="none" stroke="#cfe6fb" stroke-width="4" stroke-dasharray="1 2.300"/><path d="M21 -18L3 4 -3 -3Z" fill="#e64a3c"/><path d="M-19 17L-3 -3 3 4Z" fill="#f4f4f4"/>` },
  { g: svg`${tile("#fdfdfd")}<g fill="none" stroke="#bdd9f1" stroke-width="1.500"><path d="M-33 -12H-10M10 -12H33M-33 4H33M-33 17H33M-19 4V33M19 4V33"/></g><path d="M-16 -25H17L21 -7H-20Z" fill="#3d9be6"/><rect x="-20" y="-8" width="41" height="3" fill="#2457c5"/>
    <circle cy="-16" r="6.500" fill="#fff"/><path d="M0 -16V-22.500A6.500 6.500 0 0 1 5 -12Z" fill="#e8632c"/><path d="M0 -16V-22.500A6.500 6.500 0 0 0 -5 -12Z" fill="#3aa0e8"/><path d="M0 -16L5 -12A6.500 6.500 0 0 1 -5 -12Z" fill="#58b947"/><path d="M0 -5V24" stroke="#8a8f96" stroke-width="3.500"/><path d="M-10 25H10" stroke="#8a8f96" stroke-width="2.500"/>` },
  { dot: true, g: svg`${tile("#f7f7f7")}<circle r="27.500" fill="#cb4d3e"/><path d="M-23.800 -13.700A27.500 27.500 0 0 0 0 27.500L12 7 0 13 -12 7Z" fill="#4c9f63"/><path d="M24 -13.500A27.500 27.500 0 0 1 0 27.500L12 6 11 -13.500Z" fill="#f6cf5c"/><circle r="13" fill="#f4f4f4"/><circle r="10" fill="#4f86ec"/>` },
  { dot: true, g: svg`${jet("pc")}${jetText("PC")}` },
  { g: svg`${jet("ij")}${jetText("IJ")}` },
  { g: svg`<rect x="-35" y="-36" width="71" height="72" rx="18" fill="url(#zoom)"/><path d="M-22 -12H2Q8 -12 8 -6V12H-16Q-22 12 -22 6Z" fill="#fff"/><path d="M11 -4L21 -12V12L11 4Z" fill="#fff"/>` },
  { g: svg`${tile("#c4502f")}<circle r="25" fill="#f6f4f3"/><path d="M-13 -3L-5 5 -13 14M13 -12L4 -3 13 6" fill="none" stroke="#c4502f" stroke-width="6"/>` },
  { g: svg`<rect x="-39" y="-40" width="79" height="80" rx="12" fill="url(#sql)"/><g fill="none" stroke="#f4f7f9" stroke-width="2.500" stroke-linejoin="round"><path d="M-19 12Q-22 5 -22 -3L-28 -21Q-30 -28 -22 -29Q-10 -28 -4 -16Q6 -3 9 10Q24 14 26 20L22 21Q29 25 33 30"/><path d="M-18 11L-14 5Q-11 13 -4 17"/></g>
    <path d="M17 -33q5 2 4 7q-5 3-7-2q-1 8 5 9l8 10q4 2 5-2l-7-11q4-6-2-10Z" fill="#f4f7f9"/>` },
  { g: svg`<path d="M-33 -24L-8 -37 2 -30 14 -36 18 -20 32 -8 24 6 33 30 8 37 -14 36 -37 22Z" fill="#5fcb7e"/><path d="M14 -36L18 -20 -2 -24Z" fill="#a7e34a"/><path d="M18 -20L32 -8 22 4Z" fill="#53c8ee"/><path d="M24 0L33 30 8 37 -16 28Z" fill="#e9f04e"/><path d="M-37 22L-24 20 -14 36Z" fill="#3fae8e"/>
    <rect x="-23" y="-23" width="46" height="46" fill="#060806"/>${jetText("PC")}<path d="M-17 15.500H0" stroke="#fff" stroke-width="3"/>` },
  { g: svg`${tile("url(#gear)")}<circle r="25" fill="#565b60"/><circle r="26.500" fill="none" stroke="#26292c" stroke-width="4" stroke-dasharray="2 1.500"/><circle r="19" fill="#84898e" stroke="#222" stroke-width="2.500"/><circle r="13" fill="none" stroke="#3a3d40" stroke-width="6"/><path d="M0 0L-11 -18M0 0H22M0 0L-11 19" stroke="#c5c9cc" stroke-width="4"/><circle r="4" fill="#2c2f31"/>${badge("1")}` },
  { g: svg`${tile("#fdfefd")}<path d="M-22 -33V33M-11 -33V33M0 -33V33M11 -33V33M22 -33V33M-33 -22H33M-33 -11H33M-33 0H33M-33 11H33M-33 22H33" stroke="#cdeacb" stroke-width="1"/><path d="M-21 2H-12V24H-21Z" fill="#d8414a"/><path d="M-10 -11H-1V24H-10Z" fill="#f09b38"/><path d="M1 -24H10V24H1Z" fill="#6ad04e"/><path d="M12 -17H21V24H12Z" fill="#3f83ee"/>` },
];

const EXTRA: { g: SVGTemplateResult; dot?: boolean }[] = [
  { dot: true, g: dockerCircle },
  { dot: true, g: svg`<rect x="-33" y="-33" width="66" height="66" rx="15" fill="#c9cbce"/><rect x="-31" y="-31" width="62" height="61" rx="13" fill="#060606"/><rect x="-26" y="-26" width="52" height="51" rx="9" fill="#262626"/><path d="M-21 -20L-15 -15.500 -21 -11M-11 -8.500H-2" fill="none" stroke="#fff" stroke-width="2.600"/>` },
  { g: dockerCircle },
];
const TAIL: { g: SVGTemplateResult }[] = [
  { g: svg`<path d="M-30 -28H-20V18H-30Z" fill="#24262c"/><path d="M-26 -33H-8V-26H-26Z" fill="#49a7d4"/><path d="M0 -27H31V18H0Z" fill="#eef4f8"/><path d="M27 -10L31 -16M27 0L31 -6M27 10L31 4" stroke="#49a7d4" stroke-width="2"/>
    <path d="M-25 -31H9L26 -13V38H-25Z" fill="#f3f3f3"/><path d="M9 -31L26 -13H9Z" fill="#d5d5d5"/><path d="M-12 -22H5M-17 -14H17M-17 -11H17M-17 -8H17M-17 -5H17M-17 -2H15M-17 4H17M-17 7H17M-17 10H12M-17 16H17M-17 19H14" stroke="#a9a9a9" stroke-width="1"/>
    <text x="0" y="33" text-anchor="middle" font-family="Inter" font-size="11" fill="#555">DOCX</text>` },
  { g: svg`<path d="M-28 -28L-20 -36 -10 -32 -2 -39 6 -32 16 -37 27 -26 22 -18H-22Z" fill="#e9e9ec"/><path d="M-18 -30l8 -3 -2 8zM-4 -34l7 5 -8 3zM10 -31l9 2 -6 7z" fill="#5d6068"/><path d="M-7 -26l5 -2 1 5zM16 -24l5 1 -4 4z" fill="#4fb8c8"/>
    <path d="M-29 -26Q0 -14 29 -26L22 34Q20 41 0 41T-22 34Z" fill="url(#bin)"/><ellipse cx="0" cy="-25" rx="29" ry="6" fill="none" stroke="#f3f3f6" stroke-width="1.500"/>` },
];

class MacDock extends LitElement {
  static styles = css`
    :host { display: flex; box-sizing: border-box; width: 2743px; height: 104px; margin-left: 69px; padding-left: 2.500px; border-radius: 30px;
      border: 2px solid rgba(255,255,255,.2); background: linear-gradient(90deg,#7c5ec9 0,#745bc6 34%,#7b59da 42%,#8959f0 50%,#8c58f2 62%,#aa57f6 72%,#a856f6 85%,#9056f7 100%); }
    .app { width: 85.7px; height: 104px; margin-top: -2px; flex: none; overflow: visible; }
    .sep { width: 2px; height: 76px; margin: 12px 17px 0 18.600px; background: #5f25b8; flex: none; }
    .petal { mix-blend-mode: multiply; opacity: .85; }
    .defs { width: 0; height: 0; flex: none; }
  `;
  private grad(id: string, a: string, b: string) {
    return svg`<linearGradient id=${id} x1="0" y1="0" x2="0" y2="1"><stop offset="0" stop-color=${a}/><stop offset="1" stop-color=${b}/></linearGradient>`;
  }
  private get defs() {
    return svg`<defs>
      ${this.grad("silver", "#fafafa", "#d5d9e0")}${this.grad("finder", "#5cc1f8", "#2f74ec")}${this.grad("msg", "#86f07e", "#54bb48")}
      ${this.grad("mail", "#3a72ee", "#5ac1f8")}${this.grad("brown", "#b08c57", "#96733f")}${this.grad("music", "#ea5c6f", "#e83f44")}
      ${this.grad("pod", "#bb62ea", "#6b29ab")}${this.grad("store", "#54b3ef", "#2a5fd8")}${this.grad("safari", "#5ab2f0", "#2d6fd6")}
      ${this.grad("zoom", "#5d93f7", "#3f72f2")}${this.grad("sql", "#3f6d97", "#223e59")}${this.grad("gear", "#d5dde3", "#8c8c8a")}${this.grad("bin", "#cfcfd6", "#e9e9ed")}
      <linearGradient id="pc" x1="0" y1="0" x2="1" y2="1"><stop offset="0" stop-color="#4ee065"/><stop offset=".45" stop-color="#c3ee4a"/><stop offset="1" stop-color="#eef06a"/></linearGradient>
      <linearGradient id="ij" x1="0" y1="0" x2="1" y2="1"><stop offset="0" stop-color="#f08a3c"/><stop offset=".2" stop-color="#e0407c"/><stop offset=".4" stop-color="#5a58e8"/><stop offset="1" stop-color="#3d9df5"/></linearGradient>
    </defs>`;
  }
  private app(a: { g: SVGTemplateResult; dot?: boolean }) {
    return html`<svg class="app" viewBox="-42.85 -49 85.7 104">${a.g}${a.dot ? svg`<circle cy="47" r="4" fill="#16005c"/>` : ""}</svg>`;
  }
  render() {
    return html`<svg class="defs">${this.defs}</svg>
      ${APPS.map((a) => this.app(a))}<div class="sep"></div>${EXTRA.map((a) => this.app(a))}<div class="sep"></div>${TAIL.map((a) => this.app(a))}`;
  }
}
customElements.define("mac-dock", MacDock);

/* ---------- page ---------- */

class AppRoot extends LitElement {
  static styles = css`
    :host { display: flex; flex-direction: column; width: 2880px; height: 1800px; overflow: hidden;
      font-family: Inter, "Liberation Sans", sans-serif;
      background: linear-gradient(180deg, rgba(10,2,40,.55) 0, rgba(10,2,40,0) 60px) 0 1684px / 100% 116px no-repeat,
        linear-gradient(90deg, #31138c 0, #24106e 10%, #20146f 44%, #3a0aa8 48%, #4008b2 62%, #6414c4 66%, #5b12c4 80%, #4a0bd6 100%) 0 1600px / 100% 200px no-repeat,
        linear-gradient(90deg, #a5338f 0, #60506a 45%, #403a4a 70%, #bd6296 100%); }
    * { box-sizing: border-box; }
    svg { display: block; flex: none; overflow: visible; }
    .cell { flex: none; display: flex; align-items: center; }

    .menubar { height: 48px; padding-left: 40px; display: flex; align-items: center; flex: none; font-size: 25.500px; line-height: 30px; color: #231f23;
      background: linear-gradient(90deg,#ebabda 0,#e9b1dc 18%,#e6c3e2 32%,#e4d2ea 50%,#e7d2e8 64%,#ebcbe4 80%,#eac0df 100%); }
    .menubar .cell { height: 46px; margin-bottom: 2px; }
    .menubar .status svg { position: relative; top: 2px; }
    .status, .menus { display: flex; }
    .status { margin-left: auto; }
    .bold { font-weight: 700; }

    .window { margin-top: 2px; height: 1634px; flex: none; display: flex; flex-direction: column; border-radius: 20px; overflow: hidden; background: #fafafa;
      box-shadow: 0 0 0 1px rgba(0,0,0,.55); position: relative; }
    .strip { height: 84px; flex: none; background: #dfe1e5; display: flex; align-items: flex-end; box-shadow: inset 0 2px 0 #ebecef; }
    .lights { width: 187px; height: 84px; padding: 31px 0 0 42px; display: flex; gap: 16px; flex: none; }
    .light { width: 24px; height: 24px; border-radius: 50%; border: 1px solid rgba(0,0,0,.12); }
    .red { background: #ed6a5e; } .yellow { background: #f5bf4f; } .green { background: #61c554; }
    .tab { height: 68px; flex: none; display: flex; align-items: center; padding-left: 23px; font-size: 23.500px; color: #3c4043; position: relative; }
    .tab .mark { width: 32px; margin-right: 15px; }
    .tab .label { width: 126px; height: 34px; line-height: 32px; -webkit-mask-image: linear-gradient(90deg,#000 60%,transparent 98%); mask-image: linear-gradient(90deg,#000 60%,transparent 98%); }
    .tab .close { margin-left: 10px; }
    .tab .rule { width: 2px; height: 40px; background: #8e9094; margin-left: auto; position: relative; left: 1px; top: 1px; }
    .tab.active { background: #fff; border-radius: 16px 16px 0 0; }
    .tab.active .close { margin-left: 9px; }
    .tab.active::before, .tab.active::after { content: ""; position: absolute; bottom: 0; width: 16px; height: 16px; }
    .tab.active::before { left: -16px; background: radial-gradient(circle at 0 0, transparent 15.500px, #fff 16px); }
    .tab.active::after { right: -16px; background: radial-gradient(circle at 100% 0, transparent 15.500px, #fff 16px); }
    .plus { margin: 0 0 22px 33px; }
    .more { margin: 0 35px 28px auto; }

    .toolbar { height: 72px; flex: none; background: #fff; display: flex; align-items: center; color: #5f6368; }
    .toolbar .nav { width: 216px; padding-left: 31px; display: flex; align-items: center; }
    .nav svg:nth-child(2) { margin-left: 38px; }
    .nav svg:nth-child(3) { margin-left: 31px; }
    .omni { width: 2383px; height: 56px; border-radius: 28px; background: #f1f3f4; display: flex; align-items: center; padding: 0 17px 0 22px; font-size: 27.500px; line-height: 54px; color: #67696c; }
    .omni .host { color: #202124; margin: 0 -1px 0 17px; }
    .omni .share { margin-left: auto; }
    .omni .star { margin-left: 34px; }
    .tools { display: flex; align-items: center; padding-left: 31px; }
    .tools svg:nth-child(2) { margin-left: -3px; }
    .avatar { width: 44px; height: 44px; border-radius: 50%; background: #4a2da4; color: #fff; font-size: 23px; line-height: 44px; text-align: center; margin-left: 27px; }

    .bookmarks { height: 64px; flex: none; background: #fff; display: flex; padding: 0 0 9px 28px; font-size: 23.500px; color: #3c4043; }
    .bookmarks fit-label { padding-bottom: 1px; }
    .bookmarks .mark { flex: none; }
    .edge { height: 2px; flex: none; background: #dadcdc; }

    .site { flex: 1; display: flex; flex-direction: column; min-height: 0; font-family: "Liberation Sans", Arial, sans-serif; font-size: 28px; line-height: 40px; color: #333; background: #fafafa; }
    .navbar { height: 102px; flex: none; background: #357985; border-bottom: 2px solid #1f4e57; box-shadow: 0 3px 10px rgba(0,0,0,.5); display: flex; align-items: center; padding: 0 60px 0 31px; color: #dcdcdc; text-shadow: 0 -2px 0 rgba(0,0,0,.22); }
    .brand { width: 238px; display: flex; align-items: center; font-size: 36px; color: #fff; }
    .navbar .cell svg { margin-top: 2px; }
    .clock { margin-left: auto; }

    .content { flex: 1; min-height: 0; padding: 60px 30px 0; display: flex; flex-direction: column; }
    .title { height: 92px; flex: none; display: flex; align-items: flex-start; }
    .toggle { width: 70px; height: 44px; margin: 28px 12px 0 0; border: 2px solid #1f4a53; border-radius: 7px; background: #275a63; display: flex; box-shadow: inset 0 0 0 2px #0b1416, 0 2px 2px rgba(0,0,0,.2); font-size: 24px; line-height: 46px; color: #fff; padding-left: 12px; position: relative; }
    .knob { width: 13px; height: 40px; background: #fff; border-radius: 5px; border: 1px solid #ccc; margin-left: auto; }
    h3 { margin: 28px 0 0; font-size: 48px; line-height: 35px; font-weight: 400; display: flex; -webkit-text-stroke: 1.300px currentColor; }
    h3 .muted { color: #aaa; width: 130px; flex: none; }
    .schedule { margin-left: auto; width: 257px; height: 45px; border-radius: 8px; background: #777; color: #fff; font-weight: 700; font-size: 27px; line-height: 44px; text-align: center; }

    .views { height: 80px; flex: none; display: flex; align-items: center; color: #43909f; }
    .graphview { width: 240px; height: 80px; border-radius: 8px; background: #275a63; color: #fff; display: flex; align-items: center; padding-left: 30px; margin-right: 37px; flex: none; }
    .views svg { margin-bottom: 4px; }
    .graphview span { margin-left: 6px; }
    .danger svg { color: #ea3323; }
    .slot { flex: none; display: flex; }
    .hr { height: 2px; flex: none; background: #eee; }
    .views + .hr { margin-top: 30px; }

    .form { height: 68px; margin: 30px 0; flex: none; display: flex; align-items: center; }
    .pill { width: 108px; height: 35px; border-radius: 5px; background: #37801f; color: #fff; font-weight: 700; font-size: 21px; line-height: 33px; text-align: center; margin-top: 1px; flex: none; }
    .lab { padding: 0 0 6px; flex: none; white-space: pre; }
    .field { height: 68px; border: 2px solid #ccc; border-radius: 8px; background: #fff; color: #555; display: flex; align-items: center; flex: none; box-shadow: inset 0 2px 2px rgba(0,0,0,.075); justify-content: space-between; }
    .go { color: #333; justify-content: center; box-shadow: 0 2px 4px rgba(0,0,0,.12); }
    .search { color: #999; border-radius: 0; margin-left: auto; width: 364px; padding-left: 23px; }
    .f1 { width: 364px; padding-left: 23px; } .f2 { width: 138px; padding: 0 7px 0 31px; } .f3 { width: 608px; padding: 0 7px 0 31px; } .f4 { width: 258px; padding: 0 6px 0 32px; } .f5 { width: 89px; margin-left: 9px; }

    .legend { height: 39px; margin: 30px 0; flex: none; display: flex; align-items: flex-start; font-size: 22.400px; }
    .op { height: 36px; line-height: 31px; border: 2px solid #808080; border-radius: 10px; color: #000; text-align: center; flex: none; text-indent: 1px; }
    .dummy { width: 180px; margin-right: 6px; background: #e8f7e4; } .python { width: 173px; background: #fdf0ec; }
    .states { display: flex; margin-left: auto; margin-right: 7px; }
    .state { height: 39px; line-height: 31px; border: 4px solid; border-radius: 9px; text-align: center; flex: none; text-indent: 1px; }

    .canvas { flex: 1; min-height: 0; border: 2px solid #000; border-bottom: 0; background: #eee; position: relative; }
    .graph { position: absolute; left: 0; top: 0; }
    .recenter { position: absolute; right: 28px; top: 28px; width: 80px; height: 68px; border: 2px solid #000; border-radius: 8px; background: #fff; display: flex; align-items: center; justify-content: center; box-shadow: 0 2px 4px rgba(0,0,0,.15); padding-bottom: 4px; }
    .shade { position: absolute; left: 0; right: 0; bottom: 0; height: 110px; background: linear-gradient(180deg, rgba(0,0,0,0), rgba(0,0,0,.035) 35%, rgba(0,0,0,.12)); -webkit-mask-image: linear-gradient(90deg,transparent 10px,#000 170px,#000 2710px,transparent 2870px); mask-image: linear-gradient(90deg,transparent 10px,#000 170px,#000 2710px,transparent 2870px); }
    mac-dock { margin-top: 2px; flex: none; }
  `;

  private menubar() {
    return html`<div class="menubar">
      <div class="menus">
        ${row([
          { x: 40, body: icon(32, 32, "2.600 0 24 24", svg`<path d=${applePath} fill="#231f23"/>`) },
          ...MENU.map(([t, x, w], i) => ({ x, body: html`<span class=${classMap({ bold: i === 0 })}>${fit(t, w)}</span>` })),
        ], 1260)}
      </div>
      <div class="status">${row(STATUS, 2880)}</div>
    </div>`;
  }

  private strip() {
    return html`<div class="strip">
      <div class="lights"><div class="light red"></div><div class="light yellow"></div><div class="light green"></div></div>
      ${TABS.map((t) => html`<div class=${classMap({ tab: true, active: !!t.active })} style=${styleMap({ width: `${t.width}px` })}>
        <div class="mark">${t.mark}</div><div class="label">${fit(t.label, t.w)}</div>
        <div class="close">${icon(17, 17, "0 0 17 17", svg`<path d="M1.500 1.500L15.500 15.500M15.500 1.500L1.500 15.500" stroke="#3c4043" stroke-width="3"/>`)}</div>
        ${t.noSep ? "" : html`<div class="rule"></div>`}
      </div>`)}
      <div class="plus">${icon(24, 24, "0 0 24 24", svg`<path d="M12 0V24M0 12H24" stroke="#3c4043" stroke-width="3"/>`)}</div>
      <div class="more">${icon(19, 11, "0 0 19 11", svg`<path d="M1.500 1.500L9.500 9L17.500 1.500" fill="none" stroke="#3c4043" stroke-width="2.800"/>`)}</div>
    </div>`;
  }

  private toolbar() {
    return html`<div class="toolbar">
      <div class="nav">
        ${icon(26, 25, "0 0 26 25", svg`<path d="M26 12.500H2M13.500 1L2 12.500L13.500 24" fill="none" stroke="#5f6368" stroke-width="2.800"/>`)}
        ${icon(26, 25, "0 0 26 25", svg`<path d="M0 12.500H24M12.500 1L24 12.500L12.500 24" fill="none" stroke="#bcbec0" stroke-width="2.800"/>`)}
        ${icon(40, 40, "0 0 24 24", svg`<path fill="#5f6368" d="M17.650 6.350C16.200 4.900 14.210 4 12 4c-4.420 0-7.990 3.580-7.990 8s3.570 8 7.990 8c3.730 0 6.840-2.550 7.730-6h-1.700c-.82 2.600-3.200 4.400-6.030 4.400-3.600 0-6.400-2.850-6.400-6.400s2.800-6.400 6.400-6.400c1.800 0 3.350.75 4.500 1.900L14 11h6V4l-2.350 2.350z"/>`)}
      </div>
      <div class="omni">
        ${icon(28, 28, "0 0 28 28", svg`<circle cx="14" cy="14" r="12.200" fill="none" stroke="#5f6368" stroke-width="2.800"/><path d="M14 12.500V20.500M14 7.500V10.500" stroke="#5f6368" stroke-width="2.800"/>`)}
        <span class="host">${fit("localhost", 121)}</span>${fit(":8080/admin/airflow/graph?dag_id=time_of_dag_execution&root=&execution_date=2022-03-30T06%3A00%3A00%2B00%3A00", 1722)}
        <div class="share">${icon(24, 28, "0 0 24 28", svg`<path d="M7 10H2V26H22V10H17M12 18V2M7 7L12 2L17 7" fill="none" stroke="#5f6368" stroke-width="2.500" stroke-linejoin="round"/>`)}</div>
        <div class="star">${icon(36, 36, "0 0 24 24", svg`<path fill="#5f6368" d="M22 9.240l-7.190-.62L12 2 9.190 8.630 2 9.240l5.460 4.730L5.820 21 12 17.270 18.180 21l-1.630-7.030L22 9.240zM12 15.400l-3.760 2.270 1-4.280-3.320-2.880 4.380-.38L12 6.100l1.710 4.040 4.380.38-3.320 2.880 1 4.280L12 15.400z"/>`)}</div>
      </div>
      <div class="tools">
        ${icon(31, 31, "1 0 24 24", svg`<path fill="#5f6368" d="M20.500 11H19V7c0-1.100-.9-2-2-2h-4V3.500C13 2.120 11.880 1 10.500 1S8 2.120 8 3.500V5H4c-1.100 0-1.990.9-1.990 2v3.800H3.500c1.490 0 2.700 1.210 2.700 2.700s-1.210 2.700-2.700 2.700H2V20c0 1.100.9 2 2 2h3.800v-1.500c0-1.490 1.210-2.700 2.700-2.700 1.490 0 2.700 1.210 2.700 2.700V22H17c1.100 0 2-.9 2-2v-4h1.500c1.380 0 2.500-1.120 2.500-2.500S21.880 11 20.500 11z"/>`)}
        ${icon(64, 28, "-35 0 64 28", svg`<path fill="#5f6368" fill-rule="evenodd" d="M0 0H29V28H0ZM4 4V24H17V4Z"/>`)}
        <div class="avatar">K</div>
        ${icon(60, 26, "-41 -13 60 26", svg`<g fill="#5f6368"><circle cx="2" cy="-10" r="3"/><circle cx="2" r="3"/><circle cx="2" cy="10" r="3"/></g>`)}
      </div>
    </div>
    <div class="bookmarks">
      ${row([
        ...BOOKMARKS.map((b) => ({ x: b.x, body: html`<div class="mark" style=${styleMap({ width: `${b.tx - b.x}px` })}>${b.mark}</div>${fit(b.label, b.w)}` })),
        { x: 2826, body: icon(15, 14, "0 0 15 14", svg`<path d="M1 1L6.500 7L1 13M8 1L13.500 7L8 13" fill="none" stroke="#4d5054" stroke-width="2.400"/>`) },
      ], 2880)}
    </div>
    <div class="edge"></div>`;
  }

  private navbar() {
    return html`<div class="navbar">
      <div class="brand">${pinwheel(68)}${fit("Airflow", 111)}</div>
      ${row(NAV.map((n) => ({ x: n.x, body: n.cx
        ? html`<div class="slot" style=${styleMap({ width: `${n.cx - n.x}px` })}>${fit(n.label, n.w)}</div>${chevron}`
        : fit(n.label, n.w) })), 1330)}
      <div class="clock">${fit("2022-03-31 06:10:33 UTC", 330)}</div>
    </div>`;
  }

  private lab(text: string, width: number, lead: number) {
    return html`<div class="lab" style=${styleMap({ width: `${width}px`, paddingLeft: `${lead}px` })}>${text}</div>`;
  }

  private content() {
    return html`<div class="content">
      <div class="title">
        <div class="toggle">On<div class="knob"></div></div>
        <h3><span class="muted">${fit("DAG:", 118)}</span>${fit("time_of_dag_execution", 515)}</h3>
        <div class="schedule">schedule: 0 6 * * *</div>
      </div>
      <div class="views">
        <div class="graphview">${icon(28, 28, "0 0 28 28", svg`<polygon points=${burst} fill="#fff"/>`)}<span>${fit("Graph View", 146)}</span></div>
        ${row(VIEWS.map((v) => ({ x: v.x, body: html`<div class=${classMap({ slot: true, danger: v.cls === "danger" })} style=${styleMap({ width: `${v.tx - v.x}px` })}>${v.glyph}</div>${fit(v.label, v.w)}` })), 2420)}
      </div>
      <div class="hr"></div>
      <div class="form">
        <div class="pill">success</div>
        ${this.lab("Base date:", 150, 8)}<div class="field f1">2022-03-30 06:00:01</div>
        ${this.lab("Number of runs:", 219, 7.5)}<div class="field f2">25${downV}</div>
        ${this.lab("Run:", 74, 8)}<div class="field f3">${fit("scheduled__2022-03-30T06:00:00+00:00", 517)}${downV}</div>
        ${this.lab("Layout:", 108, 8)}<div class="field f4">${fit("Left->Right", 144)}${downV}</div>
        <div class="field go f5">Go</div>
        <div class="field search">Search for...</div>
      </div>
      <div class="hr"></div>
      <div class="legend">
        <div class="op dummy">DummyOperator</div><div class="op python">PythonOperator</div>
        <div class="states">${row(STATES.map(([t, x, w, c]) => ({ x, body: html`<div class="state" style=${styleMap({ width: `${w}px`, borderColor: c })}>${t}</div>` })), 2843)}</div>
      </div>
      <div class="hr"></div>
      <div class="canvas">
        <svg class="graph" width="600" height="300" viewBox="32 871 600 300" font-size="28">
          <path d="M238 1013.500H258" stroke="#333" stroke-width="2"/><path d="M256 1008L264 1013.500L256 1019Z" fill="#333"/>
          <rect x="72" y="977" width="163" height="73" rx="8" fill="#e8f7e4" stroke="#37801f" stroke-width="6"/>
          <rect x="264" y="977" width="194" height="73" rx="8" fill="#fdf0ec" stroke="#37801f" stroke-width="6"/>
          <text x="94" y="1025" textLength="123" fill="#000">start_task</text><text x="286" y="1025" textLength="154" fill="#000">create_table</text>
        </svg>
        <div class="recenter">${syncGlyph(28)}</div>
      </div>
    </div>`;
  }

  render() {
    return html`${this.menubar()}
      <div class="window">${this.strip()}${this.toolbar()}<div class="site">${this.navbar()}${this.content()}</div><div class="shade"></div></div>
      <mac-dock></mac-dock>`;
  }
}
customElements.define("app-root", AppRoot);
